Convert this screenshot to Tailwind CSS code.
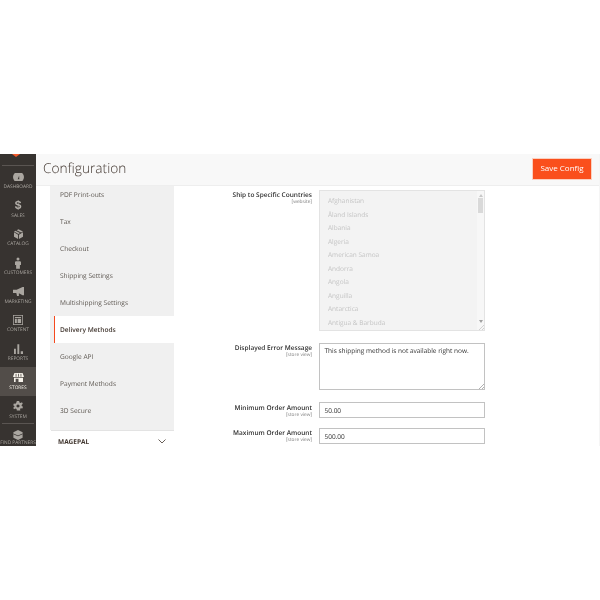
<!DOCTYPE html>
<html lang="en">
<head>
  <meta charset="UTF-8">
  <title>Configuration</title>
  <script src="https://cdn.jsdelivr.net/npm/@tailwindcss/browser@4"></script>
</head>
<body class="bg-white font-['Open_Sans',sans-serif] [text-rendering:geometricPrecision] w-[600px] h-[600px] overflow-hidden">
  <div class="h-[154px]"></div>
  <div class="flex h-[292px] overflow-hidden blur-[0.4px]">

    <!-- admin menu -->
    <nav class="w-[36px] shrink-0 bg-[#373330] text-[#aaa6a0] relative flex flex-col items-stretch">
      <svg class="absolute top-0 left-[12px] w-[8px] h-[3px]" viewBox="0 0 8 3"><path fill="#f1592a" d="M0 0h8L4 3Z"/></svg>
      <div class="h-px mx-[2px] bg-[#5a5552] mt-[11px] shrink-0"></div>

      <a class="h-[28.7px] shrink-0 flex flex-col items-center">
        <div class="h-[13px] mt-[4px] flex items-center justify-center">
          <svg class="w-[11px] h-[8px]" viewBox="0 0 14 10"><path fill="#aaa6a0" fill-rule="evenodd" d="M2 10A7 7 0 1 1 12 10ZM7.800 3.500 6 8h2Z"/></svg>
        </div>
        <span class="text-[4.800px] leading-[8px] uppercase">Dashboard</span>
      </a>
      <a class="h-[28.7px] shrink-0 flex flex-col items-center">
        <div class="h-[13px] mt-[4px] flex items-center justify-center">
          <span class="text-[12px] leading-[13px] font-bold text-[#b5b1ab] font-['Liberation_Sans',sans-serif]">$</span>
        </div>
        <span class="text-[4.800px] leading-[8px] uppercase">Sales</span>
      </a>
      <a class="h-[28.7px] shrink-0 flex flex-col items-center">
        <div class="h-[13px] mt-[4px] flex items-center justify-center">
          <svg class="w-[9px] h-[10px]" viewBox="0 0 12 13"><path fill="#aaa6a0" d="M6 0 12 3 9.500 4.500 3.500 1.500ZM2 2.300 8 5.300 6 6.500 0 3ZM0 4.200 5.400 7.500V13L0 10ZM12 4.200V10L6.600 13V7.500Z"/></svg>
        </div>
        <span class="text-[4.800px] leading-[8px] uppercase">Catalog</span>
      </a>
      <a class="h-[28.7px] shrink-0 flex flex-col items-center">
        <div class="h-[13px] mt-[4px] flex items-center justify-center">
          <svg class="w-[6px] h-[12px]" viewBox="0 0 8 15"><circle cx="4" cy="2" r="2" fill="#aaa6a0"/><path fill="#aaa6a0" d="M1 5h6l1 1v4H6.500v5h-5v-5H0V6Z"/></svg>
        </div>
        <span class="text-[4.800px] leading-[8px] uppercase">Customers</span>
      </a>
      <a class="h-[28.7px] shrink-0 flex flex-col items-center">
        <div class="h-[13px] mt-[4px] flex items-center justify-center">
          <svg class="w-[11px] h-[9px]" viewBox="0 0 15 12"><path fill="#aaa6a0" d="M0 3.500h5L13 0h2v11h-2L8 8.500V12H5.500L4.500 8H0Z"/></svg>
        </div>
        <span class="text-[4.800px] leading-[8px] uppercase">Marketing</span>
      </a>
      <a class="h-[28.7px] shrink-0 flex flex-col items-center">
        <div class="h-[13px] mt-[4px] flex items-center justify-center">
          <svg class="w-[10px] h-[10px]" viewBox="0 0 13 13"><path fill="#aaa6a0" fill-rule="evenodd" d="M0 0h13v13H0ZM1 1v11h11V1ZM2.500 2.500h8V4h-8ZM2.500 5h2.500v5.500H2.500ZM6 5h4.500v5.500H6Z"/></svg>
        </div>
        <span class="text-[4.800px] leading-[8px] uppercase">Content</span>
      </a>
      <a class="h-[28.7px] shrink-0 flex flex-col items-center">
        <div class="h-[13px] mt-[4px] flex items-center justify-center">
          <svg class="w-[9px] h-[10px]" viewBox="0 0 12 13"><path fill="#aaa6a0" d="M0 6h2.500v7H0ZM4.500 0H7v13H4.500ZM9 9.500h3V13H9Z"/></svg>
        </div>
        <span class="text-[4.800px] leading-[8px] uppercase">Reports</span>
      </a>
      <a class="h-[28.7px] shrink-0 flex flex-col items-center bg-[#524d49] text-[#f7f3eb]">
        <div class="h-[13px] mt-[4px] flex items-center justify-center">
          <svg class="w-[11px] h-[9px]" viewBox="0 0 13 11"><path fill="#f7f3eb" d="M1.500 0h10L13 4v1H0V4ZM1 5.800h11V11H1Z"/><path fill="#524d49" d="M3 1h1v3.500H3ZM6 1h1v3.500H6ZM9 1h1v3.500H9ZM3 7h3.500v4H3Z"/></svg>
        </div>
        <span class="text-[4.800px] leading-[8px] uppercase">Stores</span>
      </a>
      <a class="h-[28.7px] shrink-0 flex flex-col items-center">
        <div class="h-[13px] mt-[4px] flex items-center justify-center">
          <svg class="w-[10px] h-[10px]" viewBox="0 0 13 13"><path fill="#aaa6a0" fill-rule="evenodd" d="M5 0h3l.4 2 1.500.7L11.700 1.700l1 2-1.500 1.400.1 1.400 1.700 1.100-.8 2.100-2-.3-1 1.100.3 2H5l-.4-2-1.500-.7-1.800 1-1-2 1.500-1.400V6.500L.3 5.400l.8-2.100 2 .3 1-1.100ZM6.500 4.500a2 2 0 1 0 .01 0Z"/></svg>
        </div>
        <span class="text-[4.800px] leading-[8px] uppercase">System</span>
      </a>
      <div class="h-px mx-[2px] bg-[#5a5552] mt-[-1px] shrink-0 relative"></div>
      <a class="h-[21px] shrink-0 flex flex-col items-center">
        <div class="h-[13px] mt-[4px] flex items-center justify-center">
          <svg class="w-[10px] h-[10px]" viewBox="0 0 12 13"><path fill="#aaa6a0" d="M6 0 12 3v7L6 13 0 10V3Z"/><path fill="#373330" d="M0 4.500 6 7 12 4.500V5.500L6 8 0 5.500Z"/></svg>
        </div>
        <span class="text-[4.800px] leading-[4px] uppercase whitespace-nowrap">Find Partners</span>
      </a>
    </nav>

    <main class="flex-1 min-w-0 flex flex-col border-r border-[#f5f5f5]">
      <!-- page title -->
      <header class="h-[32px] shrink-0 bg-[#f8f8f8] border-b border-[#eeeeee] flex items-center justify-between pl-[7px] pr-[7px]">
        <h1 class="text-[13.700px] leading-[28px] font-light text-[#41362f] mt-[-2px]">Configuration</h1>
        <button class="w-[60px] h-[22px] mt-[-2px] pb-[1px] bg-[#fa4f1c] border border-[#fbd0c0] text-[8px] font-medium text-white">Save Config</button>
      </header>

      <div class="flex flex-1 min-h-0">
        <!-- tabs -->
        <aside class="w-[124px] ml-[14px] shrink-0 flex flex-col text-[6.600px] text-[#5c5650]">
          <div class="bg-[#f0f0f0] pl-[10px] h-[130px] shrink-0 flex flex-col">
            <a class="h-[17px] leading-[17px] mb-[5px]">PDF Print-outs</a>
            <a class="h-[27px] leading-[27px]">Tax</a>
            <a class="h-[27px] leading-[27px]">Checkout</a>
            <a class="h-[27px] leading-[27px]">Shipping Settings</a>
            <a class="h-[27px] leading-[27px]">Multishipping Settings</a>
          </div>
          <div class="bg-[#f0f0f0] shrink-0">
            <a class="block ml-[4px] h-[27px] leading-[27px] pl-[5px] bg-white border-l-[1.500px] border-[#f5491e] font-semibold text-[#41362f]">Delivery Methods</a>
          </div>
          <div class="bg-[#f0f0f0] pl-[10px] h-[87px] shrink-0">
            <a class="block h-[27px] leading-[27px]">Google API</a>
            <a class="block h-[27px] leading-[27px]">Payment Methods</a>
            <a class="block h-[27px] leading-[27px]">3D Secure</a>
          </div>
          <div class="flex items-center justify-between h-[22px] shrink-0 pl-[7px] pr-[8px] border-t border-[#e3e3e3] ml-px text-[6.500px] font-bold text-[#41362f]">
            <span>MAGEPAL</span>
            <svg class="w-[8px] h-[5px]" viewBox="0 0 8 5"><path d="M.5.500 4 4 7.500.500" fill="none" stroke="#41362f" stroke-width=".8"/></svg>
          </div>
        </aside>

        <!-- form -->
        <section class="flex-1 min-w-0 pt-[4px] pl-[38px] overflow-hidden">
          <div class="flex">
            <div class="w-[100px] text-right shrink-0">
              <label class="block text-[6.500px] leading-[10px] font-semibold text-[#303030] whitespace-nowrap">Ship to Specific Countries</label>
              <span class="block text-[4.800px] leading-[7px] text-[#808080] mt-[-1px]">[website]</span>
            </div>
            <div class="ml-[7px] w-[166px] h-[141px] bg-[#f3f3f3] border border-[#e3e3e3] relative shrink-0 text-[6.500px] leading-[13.500px] text-[#c4c4c4] pl-[8px] pt-[3px] overflow-hidden">
              <p>Afghanistan</p>
              <p>Åland Islands</p>
              <p>Albania</p>
              <p>Algeria</p>
              <p>American Samoa</p>
              <p>Andorra</p>
              <p>Angola</p>
              <p>Anguilla</p>
              <p>Antarctica</p>
              <p>Antigua &amp; Barbuda</p>
              <div class="absolute right-0 top-0 bottom-0 w-[7px] bg-[#f7f7f7] flex flex-col items-center">
                <div class="w-0 h-0 mt-[3px] border-x-[2px] border-x-transparent border-b-[3px] border-b-[#c8c8c8]"></div>
                <div class="w-[5px] h-[15px] mt-[1px] bg-[#d9d9d9]"></div>
                <div class="w-0 h-0 mt-auto mb-[7px] border-x-[2px] border-x-transparent border-t-[3px] border-t-[#a0a0a0]"></div>
              </div>
              <svg class="absolute right-0 bottom-0 w-[6px] h-[6px]" viewBox="0 0 6 6"><path d="M6 1 1 6M6 4 4 6" stroke="#c0c0c0" stroke-width=".7"/></svg>
            </div>
          </div>

          <div class="flex mt-[12px]">
            <div class="w-[100px] text-right shrink-0">
              <label class="block text-[6.500px] leading-[10px] font-semibold text-[#303030] whitespace-nowrap">Displayed Error Message</label>
              <span class="block text-[4.800px] leading-[7px] text-[#808080] mt-[-1px]">[store view]</span>
            </div>
            <div class="ml-[7px] w-[166px] h-[47px] border border-[#c2c2c2] relative shrink-0 text-[6.500px] leading-[12px] text-[#303030] pl-[4.500px] pt-[1px]">
              <p class="[will-change:opacity]">This shipping method is not available right now.</p>
              <svg class="absolute right-0 bottom-0 w-[6px] h-[6px]" viewBox="0 0 6 6"><path d="M6 1 1 6M6 4 4 6" stroke="#909090" stroke-width=".7"/></svg>
            </div>
          </div>

          <div class="flex mt-[12px]">
            <div class="w-[100px] h-[16px] text-right shrink-0 pt-[1px]">
              <label class="block text-[6.500px] leading-[10px] font-semibold text-[#303030] whitespace-nowrap">Minimum Order Amount</label>
              <span class="block text-[4.800px] leading-[7px] text-[#808080] mt-[-1px]">[store view]</span>
            </div>
            <div class="ml-[7px] w-[166px] h-[16px] border border-[#c2c2c2] shrink-0 text-[6.500px] leading-[14px] text-[#303030] pl-[4.500px] pt-[1px]">50.00</div>
          </div>

          <div class="flex mt-[10px]">
            <div class="w-[100px] h-[16px] text-right shrink-0">
              <label class="block text-[6.500px] leading-[10px] font-semibold text-[#303030] whitespace-nowrap">Maximum Order Amount</label>
              <span class="block text-[4.800px] leading-[7px] text-[#808080] mt-[-1px]">[store view]</span>
            </div>
            <div class="ml-[7px] w-[166px] h-[16px] border border-[#c2c2c2] shrink-0 text-[6.500px] leading-[14px] text-[#303030] pl-[4.500px] pt-[1px]">500.00</div>
          </div>
        </section>
      </div>
    </main>
  </div>
</body>
</html>
